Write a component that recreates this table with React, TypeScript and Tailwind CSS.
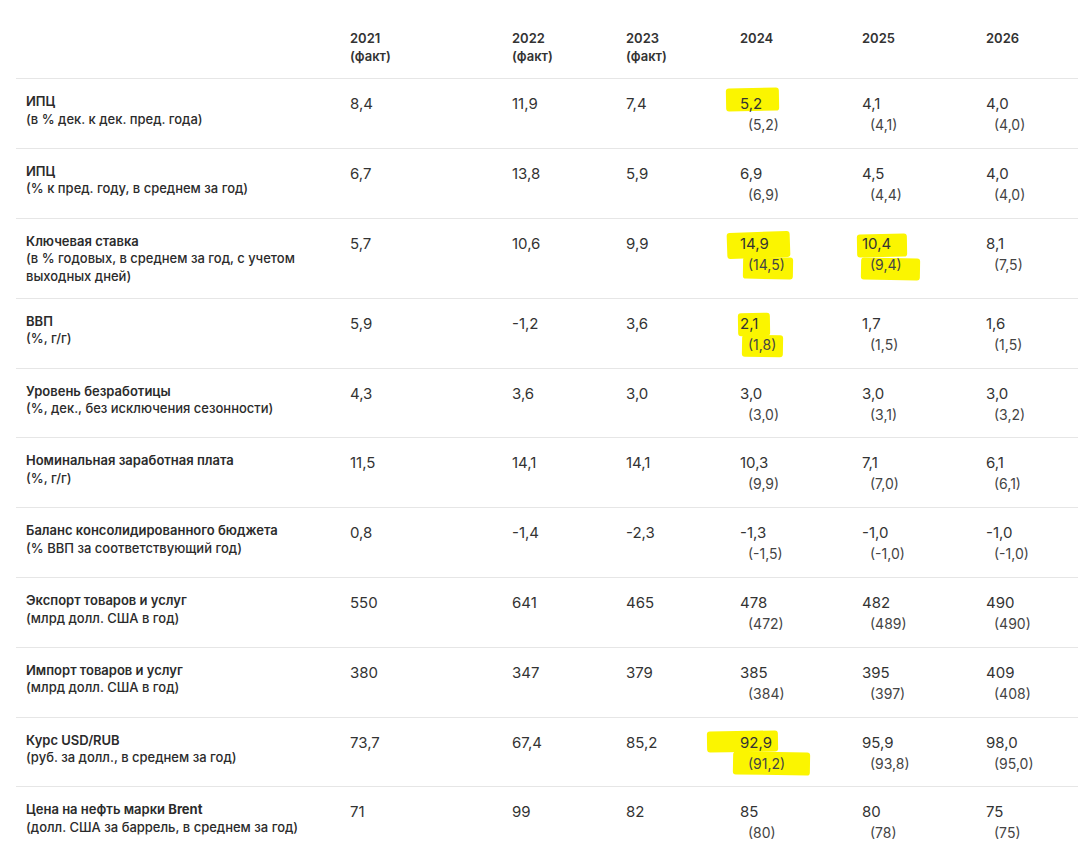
import React from 'react';

type Mark = { l: number; t: number; w: number; h: number; r?: number };
type Cell = { v: string; p?: string; marks?: Mark[] };
type Row = { title: React.ReactNode; sub: string[]; cells: Cell[] };

const years = [
  { y: '2021', f: true },
  { y: '2022', f: true },
  { y: '2023', f: true },
  { y: '2024', f: false },
  { y: '2025', f: false },
  { y: '2026', f: false },
];

const c = (v: string, p?: string, marks?: Mark[]): Cell => ({ v, p, marks });

const rows: Row[] = [
  {
    title: 'ИПЦ',
    sub: ['(в % дек. к дек. пред. года)'],
    cells: [c('8,4'), c('11,9'), c('7,4'), c('5,2', '(5,2)', [{ l: -14, t: 9, w: 53, h: 23, r: -1 }]), c('4,1', '(4,1)'), c('4,0', '(4,0)')],
  },
  {
    title: 'ИПЦ',
    sub: ['(% к пред. году, в среднем за год)'],
    cells: [c('6,7'), c('13,8'), c('5,9'), c('6,9', '(6,9)'), c('4,5', '(4,4)'), c('4,0', '(4,0)')],
  },
  {
    title: 'Ключевая ставка',
    sub: ['(в % годовых, в среднем за год, с учетом', 'выходных дней)'],
    cells: [
      c('5,7'),
      c('10,6'),
      c('9,9'),
      c('14,9', '(14,5)', [
        { l: -13, t: 13, w: 63, h: 26, r: -2 },
        { l: 3, t: 38, w: 50, h: 22, r: 1 },
      ]),
      c('10,4', '(9,4)', [
        { l: -5, t: 15, w: 50, h: 23, r: -1 },
        { l: -1, t: 39, w: 59, h: 22, r: 1 },
      ]),
      c('8,1', '(7,5)'),
    ],
  },
  {
    title: 'ВВП',
    sub: ['(%, г/г)'],
    cells: [
      c('5,9'),
      c('-1,2'),
      c('3,6'),
      c('2,1', '(1,8)', [
        { l: -2, t: 14, w: 32, h: 23, r: -1 },
        { l: 2, t: 36, w: 41, h: 22, r: 1 },
      ]),
      c('1,7', '(1,5)'),
      c('1,6', '(1,5)'),
    ],
  },
  {
    title: 'Уровень безработицы',
    sub: ['(%, дек., без исключения сезонности)'],
    cells: [c('4,3'), c('3,6'), c('3,0'), c('3,0', '(3,0)'), c('3,0', '(3,1)'), c('3,0', '(3,2)')],
  },
  {
    title: 'Номинальная заработная плата',
    sub: ['(%, г/г)'],
    cells: [c('11,5'), c('14,1'), c('14,1'), c('10,3', '(9,9)'), c('7,1', '(7,0)'), c('6,1', '(6,1)')],
  },
  {
    title: 'Баланс консолидированного бюджета',
    sub: ['(% ВВП за соответствующий год)'],
    cells: [c('0,8'), c('-1,4'), c('-2,3'), c('-1,3', '(-1,5)'), c('-1,0', '(-1,0)'), c('-1,0', '(-1,0)')],
  },
  {
    title: 'Экспорт товаров и услуг',
    sub: ['(млрд долл. США в год)'],
    cells: [c('550'), c('641'), c('465'), c('478', '(472)'), c('482', '(489)'), c('490', '(490)')],
  },
  {
    title: 'Импорт товаров и услуг',
    sub: ['(млрд долл. США в год)'],
    cells: [c('380'), c('347'), c('379'), c('385', '(384)'), c('395', '(397)'), c('409', '(408)')],
  },
  {
    title: 'Курс USD/RUB',
    sub: ['(руб. за долл., в среднем за год)'],
    cells: [
      c('73,7'),
      c('67,4'),
      c('85,2'),
      c('92,9', '(91,2)', [
        { l: -33, t: 13, w: 71, h: 21, r: -1 },
        { l: -7, t: 34, w: 77, h: 23, r: 1 },
      ]),
      c('95,9', '(93,8)'),
      c('98,0', '(95,0)'),
    ],
  },
  {
    title: (
      <>
        Цена на нефть марки <span className="font-bold">Brent</span>
      </>
    ),
    sub: ['(долл. США за баррель, в среднем за год)'],
    cells: [c('71'), c('99'), c('82'), c('85', '(80)'), c('80', '(78)'), c('75', '(75)')],
  },
];

const grid = 'grid grid-cols-[334px_162px_114px_114px_122px_124px_1fr]';

function ValueCell({ cell }: { cell: Cell }) {
  return (
    <div className="relative pt-[14px] pb-[12.8px]">
      {cell.marks?.map((m, i) => (
        <span
          key={i}
          className="absolute bg-[#fbf500] rounded-[3px]"
          style={{ left: m.l, top: m.t, width: m.w, height: m.h, transform: `rotate(${m.r ?? 0}deg)` }}
        />
      ))}
      <div className="relative text-[15px] leading-[22px] text-[#333]">{cell.v}</div>
      {cell.p && <div className="relative ml-[8px] text-[14px] leading-[20px] text-[#444]">{cell.p}</div>}
    </div>
  );
}

export default function App() {
  return (
    <div className="w-[1078px] h-[855px] overflow-hidden bg-white font-['Inter',sans-serif] text-[#333]">
      <div className="ml-4">
        <div className={`${grid} pt-[29px] pb-[13px] border-b border-[#e6e6e6]`}>
          <div />
          {years.map(y => (
            <div key={y.y} className="text-[13px] leading-[18px] font-semibold text-[#333]">
              <div>{y.y}</div>
              {y.f && <div>(факт)</div>}
            </div>
          ))}
        </div>
        {rows.map((r, i) => (
          <div key={i} className={`${grid} border-b border-[#e6e6e6]`}>
            <div className="pl-[10px] pt-[14px] pb-[12.8px] text-[13px] leading-[17.5px] font-medium text-[#2b2b2b]">
              <div className="font-semibold">{r.title}</div>
              {r.sub.map((s, j) => (
                <div key={j}>{s}</div>
              ))}
            </div>
            {r.cells.map((cell, j) => (
              <ValueCell key={j} cell={cell} />
            ))}
          </div>
        ))}
      </div>
    </div>
  );
}
